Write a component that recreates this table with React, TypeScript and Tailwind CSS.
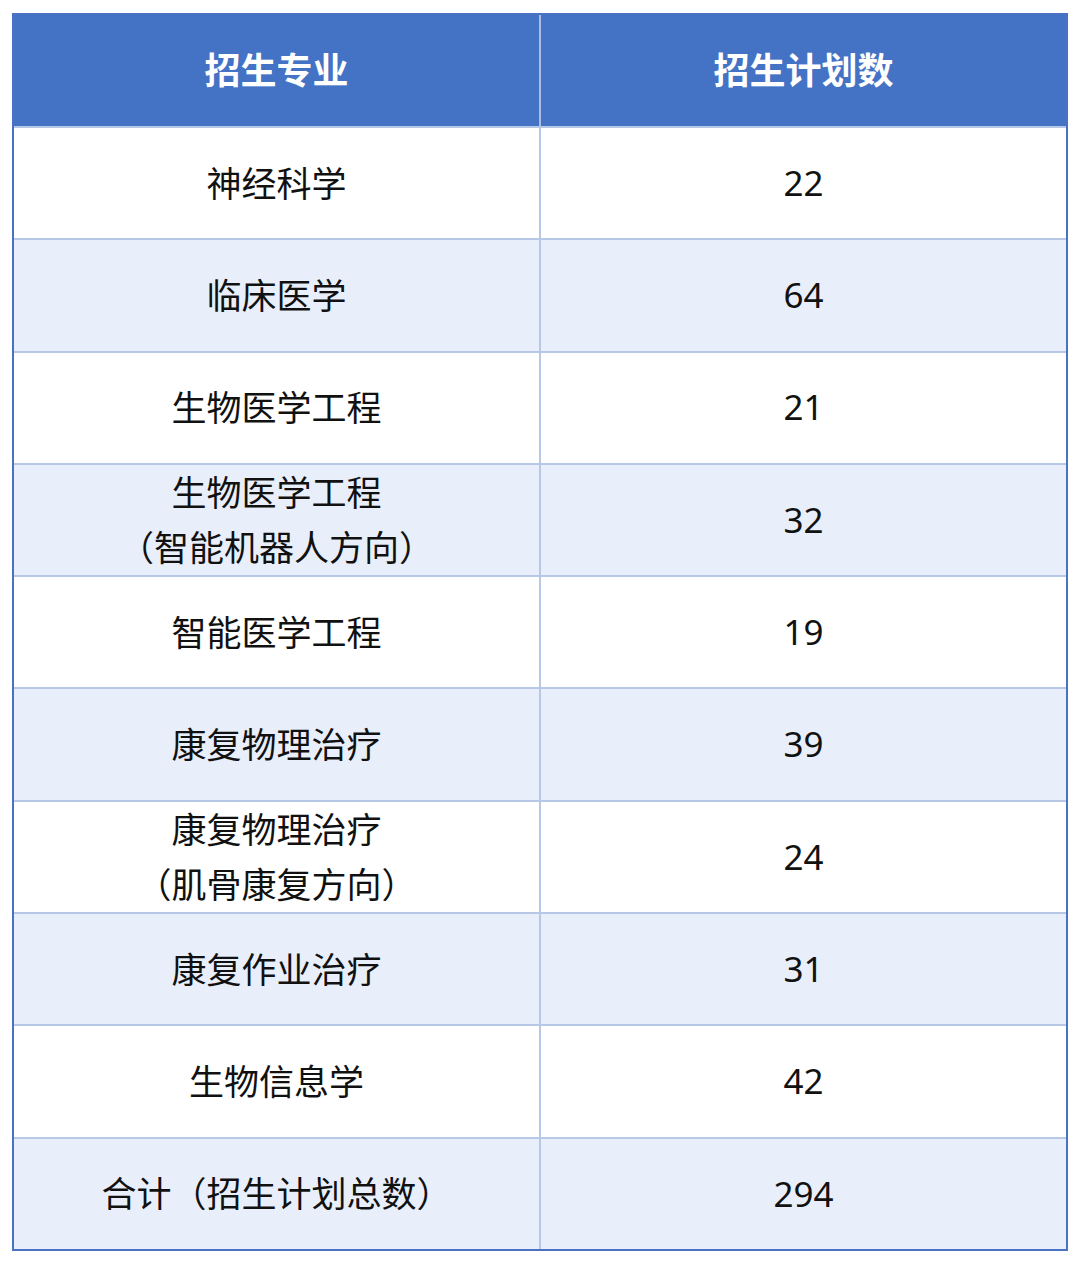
const rows: { name: string[]; count: string }[] = [
  { name: ['神经科学'], count: '22' },
  { name: ['临床医学'], count: '64' },
  { name: ['生物医学工程'], count: '21' },
  { name: ['生物医学工程', '（智能机器人方向）'], count: '32' },
  { name: ['智能医学工程'], count: '19' },
  { name: ['康复物理治疗'], count: '39' },
  { name: ['康复物理治疗', '（肌骨康复方向）'], count: '24' },
  { name: ['康复作业治疗'], count: '31' },
  { name: ['生物信息学'], count: '42' },
  { name: ['合计（招生计划总数）'], count: '294' },
]

const font = { fontFamily: '"Noto Sans", "Noto Sans CJK SC", sans-serif' }

export default function App() {
  return (
    <div className="w-[1080px] h-[1264px] bg-white pt-[13px] pl-[12px]" style={font}>
      <div className="w-[1056px] border-2 border-[#4a72c4]">
        <div className="flex h-[111px] bg-[#4472c4] text-white text-[36px] font-bold">
          <div className="flex-1 flex items-center justify-center border-r-2 border-[#a9bde6]">招生专业</div>
          <div className="flex-1 flex items-center justify-center">招生计划数</div>
        </div>
        {rows.map((r, i) => (
          <div
            key={i}
            className={
              'flex h-[112.3px] text-[35px] text-[#111] border-t-2 border-[#b7c7e6] ' +
              (i % 2 === 1 ? 'bg-[#e9effa]' : 'bg-white')
            }
          >
            <div className="flex-1 flex flex-col items-center justify-center border-r-2 border-[#b7c7e6] leading-[55px]">
              {r.name.map(n => (
                <span key={n}>{n}</span>
              ))}
            </div>
            <div className="flex-1 flex items-center justify-center">{r.count}</div>
          </div>
        ))}
      </div>
    </div>
  )
}
